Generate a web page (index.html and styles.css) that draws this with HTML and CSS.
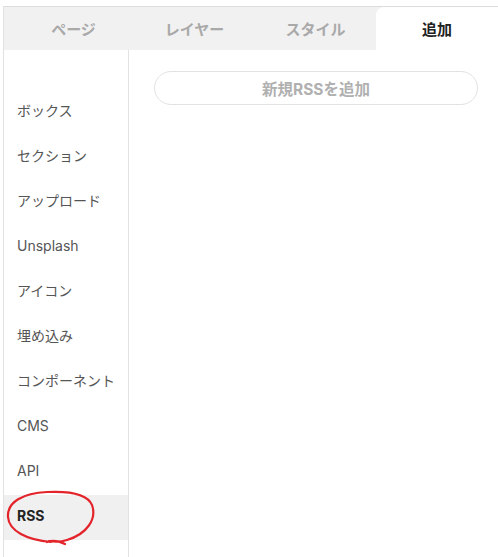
FILE: index.html
```html
<!DOCTYPE html>
<html lang="ja">
<head>
<meta charset="utf-8">
<link rel="stylesheet" href="styles.css">
</head>
<body>
<div class="panel">
  <div class="tabs">
    <div class="tab">ページ</div>
    <div class="tab">レイヤー</div>
    <div class="tab">スタイル</div>
    <div class="tab active">追加</div>
  </div>
  <div class="main">
    <ul class="side">
      <li class="item">ボックス</li>
      <li class="item">セクション</li>
      <li class="item">アップロード</li>
      <li class="item">Unsplash</li>
      <li class="item">アイコン</li>
      <li class="item">埋め込み</li>
      <li class="item">コンポーネント</li>
      <li class="item">CMS</li>
      <li class="item">API</li>
      <li class="item current">RSS</li>
    </ul>
    <div class="content">
      <button class="add">新規RSSを追加</button>
    </div>
  </div>
  <svg class="mark" width="100" height="64" viewBox="0 0 100 64" fill="none">
    <path d="M46 57 C22 55 4 46 3 32 C2 17 18 8 42 7 C62 6 82 8 87 20 C92 34 82 49 62 55 C56 57 50 57 44 56 M42 57 C47 55 54 56 60 59" stroke="#e3242b" stroke-width="2.2" stroke-linecap="round" stroke-linejoin="round"/>
  </svg>
</div>
</body>
</html>
```

FILE: styles.css
```css
html, body {
  margin: 0;
  padding: 0;
  background: #ffffff;
}
body {
  font-family: "Inter", "Noto Sans CJK JP", sans-serif;
  width: 498px;
  height: 557px;
  overflow: hidden;
}
.panel {
  position: relative;
  margin: 6px 0 0 3px;
  border-left: 1px solid #e2e2e2;
  border-top: 1px solid #dcdcdc;
  height: 560px;
}
.tabs {
  display: grid;
  grid-template-columns: 121px 121px 121px 122px;
  padding-left: 9px;
  height: 43px;
  background: #f1f1f1;
}
.tab {
  display: flex;
  align-items: center;
  justify-content: center;
  font-size: 15px;
  font-weight: 700;
  color: #a9a9a9;
}
.tab.active {
  background: #ffffff;
  color: #222222;
  border-radius: 8px 0 0 0;
}
.main {
  display: flex;
  height: 520px;
}
.side {
  list-style: none;
  margin: 0;
  padding: 40px 0 0 0;
  width: 124px;
  border-right: 1px solid #e2e2e2;
}
.item {
  height: 45px;
  display: flex;
  align-items: center;
  padding-left: 13px;
  padding-bottom: 5px;
  box-sizing: border-box;
  font-size: 14px;
  color: #555555;
}
.item.current {
  background: #f0f0f0;
  font-weight: 700;
  color: #222222;
}
.content {
  flex: 1;
  padding: 21px 20px 0 25px;
}
.add {
  width: 100%;
  height: 34px;
  border: 1px solid #e2e2e2;
  border-radius: 17px;
  background: #ffffff;
  font-family: inherit;
  font-size: 15.5px;
  font-weight: 700;
  color: #b0b0b0;
  padding: 0;
}
.mark {
  position: absolute;
  left: 1px;
  top: 478px;
}
```
